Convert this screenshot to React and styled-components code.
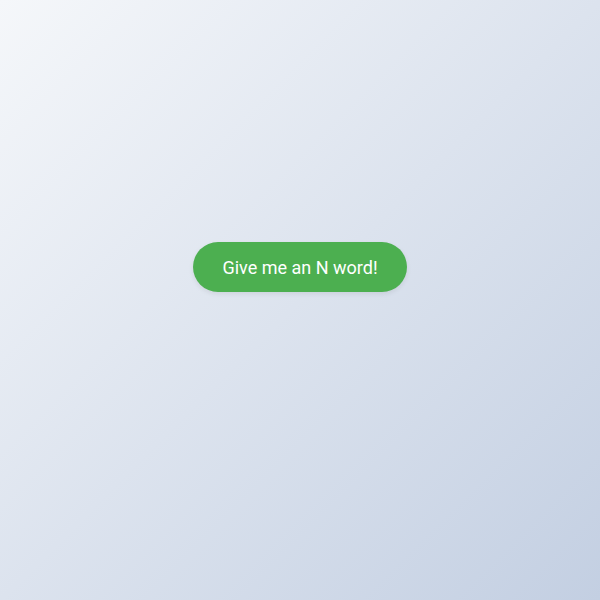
import React from "react";
import styled, { createGlobalStyle } from "styled-components";

const GlobalStyle = createGlobalStyle`
  html, body, #root {
    margin: 0;
    height: 100%;
  }
  body {
    font-family: Roboto, "Liberation Sans", sans-serif;
  }
`;

const Page = styled.main`
  height: 100%;
  display: flex;
  align-items: center;
  justify-content: center;
  background: linear-gradient(135deg, #f5f7fa 0%, #c3cfe2 100%);
`;

const WordButton = styled.button`
  width: 214px;
  height: 50px;
  border: none;
  border-radius: 25px;
  background-color: #4caf50;
  color: #ffffff;
  font-family: Roboto, "Liberation Sans", sans-serif;
  font-size: 18px;
  cursor: pointer;
  box-shadow: 0 2px 5px rgba(0, 0, 0, 0.08);
  margin-bottom: 66px;

  &:hover {
    background-color: #45a049;
  }
`;

const App = () => {
  return (
    <>
      <GlobalStyle />
      <Page>
        <WordButton>Give me an N word!</WordButton>
      </Page>
    </>
  );
};

export default App;
